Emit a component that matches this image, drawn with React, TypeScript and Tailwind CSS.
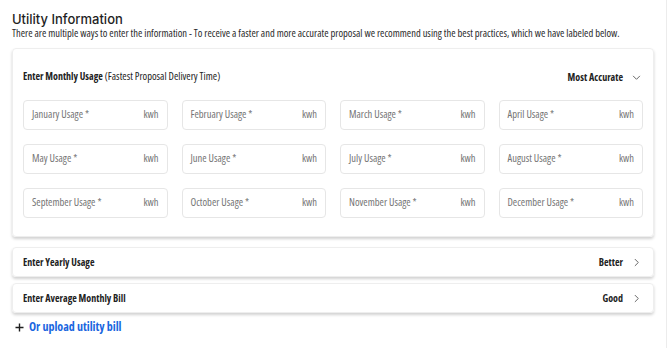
import React from "react";

const months = [
  "January", "February", "March", "April",
  "May", "June", "July", "August",
  "September", "October", "November", "December",
];

function Chevron({ dir }: { dir: "down" | "right" }) {
  return (
    <svg width="9" height="9" viewBox="0 0 10 10" fill="none" stroke="#666" strokeWidth="1.1" strokeLinecap="round" strokeLinejoin="round">
      {dir === "down" ? <path d="M1.5 3.5 L5 7 L8.5 3.5" /> : <path d="M3.5 1.5 L7 5 L3.5 8.5" />}
    </svg>
  );
}

function Plus() {
  return (
    <svg width="9" height="9" viewBox="0 0 9 9" fill="none" stroke="#1f1f1f" strokeWidth="1.4">
      <path d="M4.5 0.5 V8.5 M0.5 4.5 H8.5" />
    </svg>
  );
}

const bold = "font-bold [font-stretch:75%] text-[10px] text-[#222]";
const reg = "[font-stretch:75%] text-[10.5px]";

export default function App() {
  return (
    <div className="w-[670px] h-[348px] bg-white overflow-hidden" style={{ fontFamily: '"Open Sans", "Noto Sans", sans-serif' }}>
      <div className="w-[667px] h-full border-r border-[#ececec] pl-3 pr-[13px] pt-[11px]">
        <h1 className="text-[13px] leading-[16px] text-[#1f1f1f] font-medium" style={{ fontFamily: 'Inter, "Noto Sans", sans-serif' }}>Utility Information</h1>
        <p className={`${reg} leading-[12px] text-[#2a2a2a] whitespace-nowrap`}>
          There are multiple ways to enter the information - To receive a faster and more accurate proposal we recommend using the best practices, which we have labeled below.
        </p>
        <div className="mt-[9px] w-[642px] rounded border border-[#eeeeee] shadow-[0_2px_3px_rgba(0,0,0,0.18)] px-[10px] pt-[19px] pb-[18px]">
          <div className="flex items-center justify-between h-[18px]">
            <div className={`${reg} text-[#222]`}>
              <span className="font-bold text-[10px]">Enter Monthly Usage</span> (Fastest Proposal Delivery Time)
            </div>
            <div className="flex items-center gap-[9px] pr-[2px]">
              <span className={bold}>Most Accurate</span>
              <Chevron dir="down" />
            </div>
          </div>
          <div className="grid grid-cols-4 gap-x-[14px] gap-y-[14px] mt-[14px]">
            {months.map((m) => (
              <div key={m} className="h-[30px] rounded border border-[#e6e6e6] flex items-center justify-between px-[8px]">
                <span className={`${reg} text-[#747474]`}>{m} Usage *</span>
                <span className={`${reg} text-[#747474]`}>kwh</span>
              </div>
            ))}
          </div>
        </div>
        <div className="mt-[10px] w-[642px] h-[30px] rounded border border-[#eeeeee] shadow-[0_2px_3px_rgba(0,0,0,0.18)] flex items-center justify-between pl-[10px] pr-[12px]">
          <span className={bold}>Enter Yearly Usage</span>
          <div className="flex items-center gap-[9px]">
            <span className={bold}>Better</span>
            <Chevron dir="right" />
          </div>
        </div>
        <div className="mt-[6px] w-[642px] h-[30px] rounded border border-[#eeeeee] shadow-[0_2px_3px_rgba(0,0,0,0.18)] flex items-center justify-between pl-[10px] pr-[12px]">
          <span className={bold}>Enter Average Monthly Bill</span>
          <div className="flex items-center gap-[9px]">
            <span className={bold}>Good</span>
            <Chevron dir="right" />
          </div>
        </div>
        <div className="mt-[7px] flex items-center gap-[5px] pl-[3px] h-[14px]">
          <Plus />
          <span className="text-[12px] font-bold [font-stretch:75%] text-[#1a66e0]">Or upload utility bill</span>
        </div>
      </div>
    </div>
  );
}
